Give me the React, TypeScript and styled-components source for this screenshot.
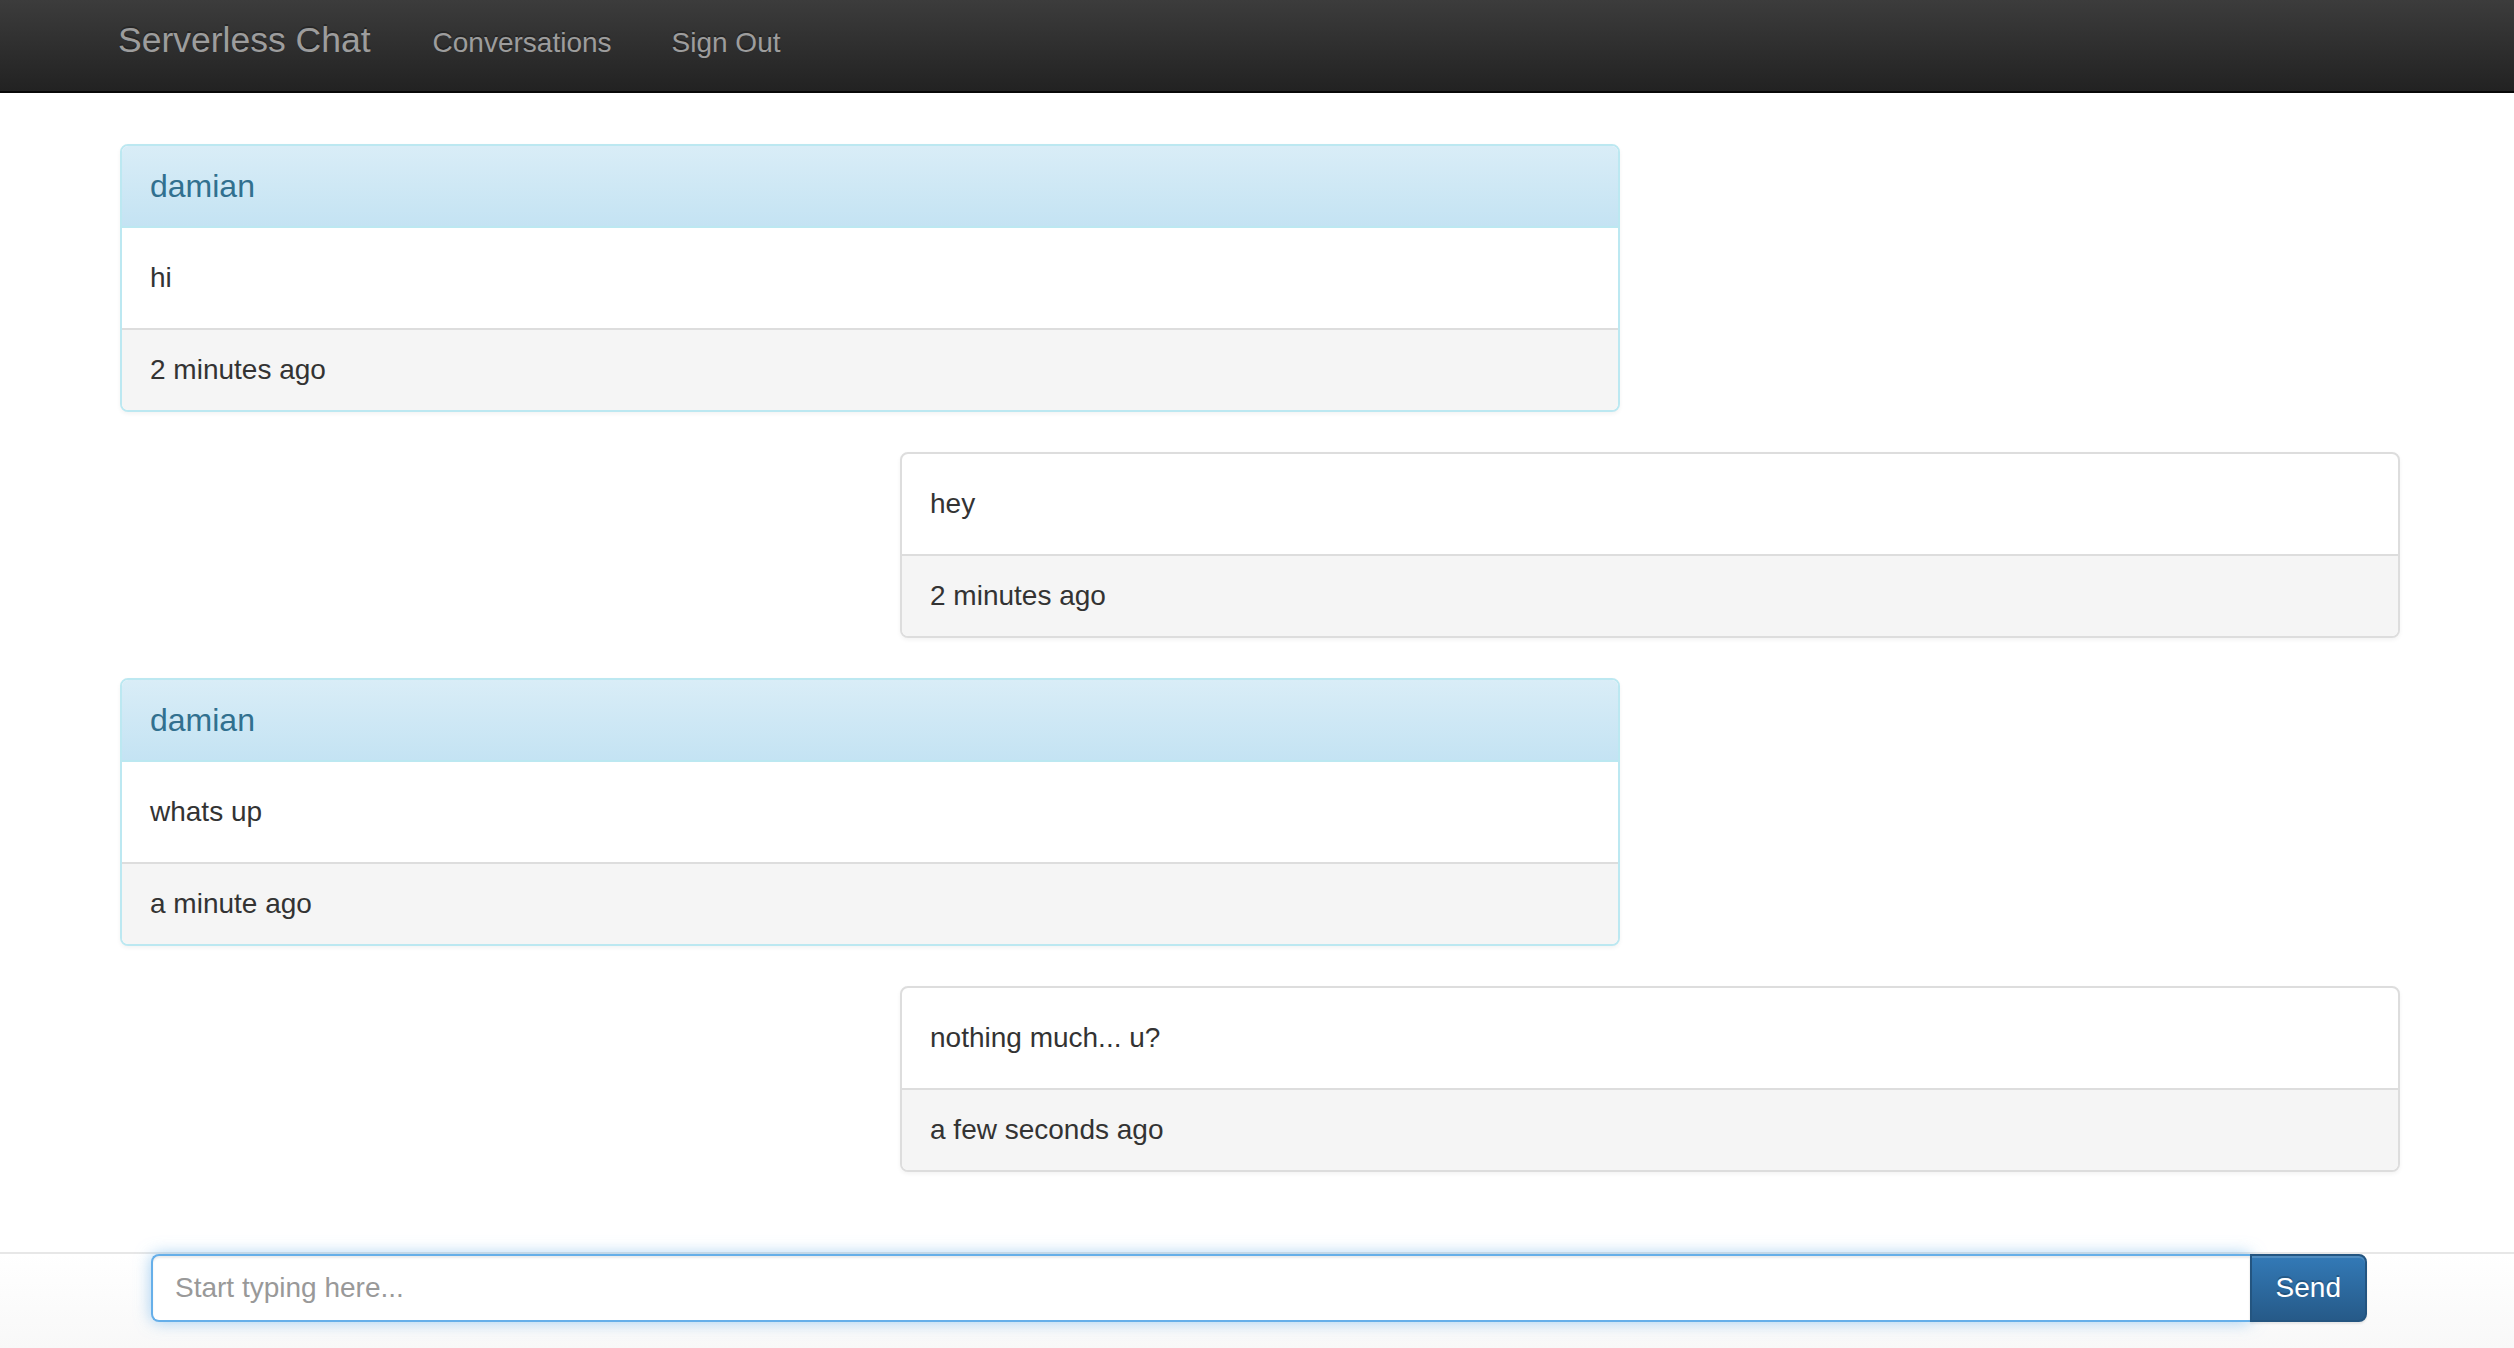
import React from "react";
import styled, { createGlobalStyle } from "styled-components";

const GlobalStyle = createGlobalStyle`
  html, body {
    margin: 0;
    padding: 0;
    background: #ffffff;
    font-family: "Liberation Sans", Arial, Helvetica, sans-serif;
    color: #333333;
  }
  * { box-sizing: border-box; }
`;

const Page = styled.div`
  display: flex;
  flex-direction: column;
  height: 1348px;
  overflow: hidden;
`;

const NavBar = styled.header`
  flex: 0 0 auto;
  height: 93px;
  background-image: linear-gradient(to bottom, #3c3c3c 0%, #222222 100%);
  border-bottom: 2px solid #080808;
  display: flex;
  align-items: baseline;
  padding: 20px 0 0 118px;
`;

const Brand = styled.a`
  font-size: 35.5px;
  line-height: 40px;
  color: #9d9d9d;
  text-decoration: none;
  text-shadow: 0 -2px 0 rgba(0, 0, 0, 0.25);
  padding-right: 32px;
`;

const NavLink = styled.a`
  font-size: 28px;
  line-height: 40px;
  color: #9d9d9d;
  text-decoration: none;
  text-shadow: 0 -2px 0 rgba(0, 0, 0, 0.25);
  padding: 0 30px;
`;

const Main = styled.main`
  flex: 1 1 auto;
  overflow: hidden;
  padding: 51px 114px 0 120px;
`;

const Feed = styled.div`
  display: flex;
  flex-direction: column;
  gap: 40px;
  width: 2280px;
`;

const Row = styled.div<{ $mine?: boolean }>`
  display: flex;
  justify-content: ${(p) => (p.$mine ? "flex-end" : "flex-start")};
`;

const Panel = styled.div<{ $info?: boolean }>`
  width: 1500px;
  background: #ffffff;
  border: 2px solid ${(p) => (p.$info ? "#bce8f1" : "#dddddd")};
  border-radius: 8px;
  box-shadow: 0 2px 4px rgba(0, 0, 0, 0.05);
  overflow: hidden;
`;

const PanelHeading = styled.div`
  padding: 20px 28px;
  border-bottom: 2px solid #bce8f1;
  background-image: linear-gradient(to bottom, #d9edf7 0%, #c4e3f3 100%);
  color: #31708f;
  font-size: 32px;
  line-height: 40px;
`;

const PanelBody = styled.div`
  padding: 30px 28px;
  font-size: 28px;
  line-height: 40px;
  color: #333333;
`;

const PanelFooter = styled.div`
  padding: 20px 28px;
  background: #f5f5f5;
  border-top: 2px solid #dddddd;
  font-size: 28px;
  line-height: 40px;
  color: #333333;
`;

const BottomBar = styled.footer`
  flex: 0 0 96px;
  border-top: 2px solid #e7e7e7;
  background-image: linear-gradient(to bottom, #ffffff 0%, #f8f8f8 100%);
  padding: 0 147px 0 151px;
`;

const InputGroup = styled.form`
  display: flex;
  height: 68px;
`;

const MessageInput = styled.input`
  flex: 1 1 auto;
  height: 68px;
  margin: 0;
  padding: 0 22px;
  font-family: "Liberation Sans", Arial, Helvetica, sans-serif;
  font-size: 28px;
  color: #555555;
  background: #ffffff;
  border: 2px solid #66afe9;
  border-right: none;
  border-radius: 8px 0 0 8px;
  outline: none;
  box-shadow: inset 0 2px 2px rgba(0, 0, 0, 0.075), 0 0 16px rgba(102, 175, 233, 0.6);
  &::placeholder {
    color: #999999;
  }
`;

const SendButton = styled.button`
  flex: 0 0 auto;
  height: 68px;
  margin: 0;
  padding: 0 24px;
  font-family: "Liberation Sans", Arial, Helvetica, sans-serif;
  font-size: 28px;
  color: #ffffff;
  background-image: linear-gradient(to bottom, #337ab7 0%, #265a88 100%);
  border: 2px solid #245580;
  border-radius: 0 8px 8px 0;
  text-shadow: 0 -2px 0 rgba(0, 0, 0, 0.2);
  box-shadow: inset 0 2px 0 rgba(255, 255, 255, 0.15), 0 2px 2px rgba(0, 0, 0, 0.075);
  cursor: pointer;
`;

type Message = {
  id: number;
  author?: string;
  text: string;
  time: string;
  mine?: boolean;
};

const messages: Message[] = [
  { id: 1, author: "damian", text: "hi", time: "2 minutes ago" },
  { id: 2, text: "hey", time: "2 minutes ago", mine: true },
  { id: 3, author: "damian", text: "whats up", time: "a minute ago" },
  { id: 4, text: "nothing much... u?", time: "a few seconds ago", mine: true },
];

export default function App() {
  return (
    <>
      <GlobalStyle />
      <Page>
        <NavBar>
          <Brand href="#">Serverless Chat</Brand>
          <NavLink href="#">Conversations</NavLink>
          <NavLink href="#">Sign Out</NavLink>
        </NavBar>
        <Main>
          <Feed>
            {messages.map((m) => (
              <Row key={m.id} $mine={m.mine}>
                <Panel $info={!m.mine}>
                  {m.author && <PanelHeading>{m.author}</PanelHeading>}
                  <PanelBody>{m.text}</PanelBody>
                  <PanelFooter>{m.time}</PanelFooter>
                </Panel>
              </Row>
            ))}
          </Feed>
        </Main>
        <BottomBar>
          <InputGroup onSubmit={(e) => e.preventDefault()}>
            <MessageInput type="text" placeholder="Start typing here..." />
            <SendButton type="submit">Send</SendButton>
          </InputGroup>
        </BottomBar>
      </Page>
    </>
  );
}
